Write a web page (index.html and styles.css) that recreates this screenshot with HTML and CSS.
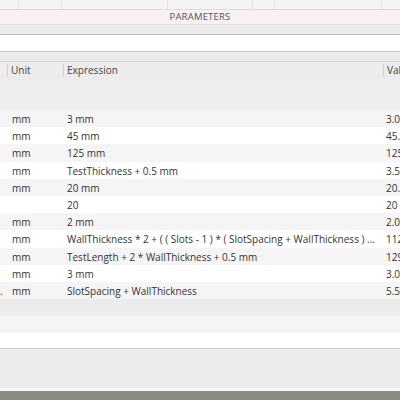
FILE: index.html
```html
<!DOCTYPE html>
<html lang="en">
<head>
  <meta charset="UTF-8" />
  <meta name="viewport" content="width=device-width, initial-scale=1.0"/>
  <title>Parameters</title>
  <link rel="stylesheet" href="styles.css">
</head>
<body>
  <div class="backdrop">
    <span></span><span></span><span></span><span></span><span></span><span></span>
  </div>

  <div class="dialog">
    <div class="titlebar">PARAMETERS</div>
    <div class="toolbar"></div>
    <div class="search"></div>
    <div class="gap"></div>

    <div class="table">
      <div class="row head">
        <div class="cell cut"></div>
        <div class="cell">Unit</div>
        <div class="cell">Expression</div>
        <div class="cell">Val</div>
      </div>
      <div class="group"></div>

      <div class="rows">
        <div class="row"><div class="cell cut"></div><div class="cell">mm</div><div class="cell">3 mm</div><div class="cell">3.0</div></div>
        <div class="row"><div class="cell cut"></div><div class="cell">mm</div><div class="cell">45 mm</div><div class="cell">45.</div></div>
        <div class="row"><div class="cell cut"></div><div class="cell">mm</div><div class="cell">125 mm</div><div class="cell">125</div></div>
        <div class="row"><div class="cell cut"></div><div class="cell">mm</div><div class="cell">TestThickness + 0.5 mm</div><div class="cell">3.5</div></div>
        <div class="row"><div class="cell cut"></div><div class="cell">mm</div><div class="cell">20 mm</div><div class="cell">20.</div></div>
        <div class="row"><div class="cell cut"></div><div class="cell"></div><div class="cell">20</div><div class="cell">20</div></div>
        <div class="row"><div class="cell cut"></div><div class="cell">mm</div><div class="cell">2 mm</div><div class="cell">2.0</div></div>
        <div class="row"><div class="cell cut"></div><div class="cell">mm</div><div class="cell">WallThickness * 2 + ( ( Slots - 1 ) * ( SlotSpacing + WallThickness ) ...</div><div class="cell">112</div></div>
        <div class="row"><div class="cell cut"></div><div class="cell">mm</div><div class="cell">TestLength + 2 * WallThickness + 0.5 mm</div><div class="cell">129</div></div>
        <div class="row"><div class="cell cut"></div><div class="cell">mm</div><div class="cell">3 mm</div><div class="cell">3.0</div></div>
        <div class="row"><div class="cell cut">.</div><div class="cell">mm</div><div class="cell">SlotSpacing + WallThickness</div><div class="cell">5.5</div></div>
        <div class="row blank dim"></div>
        <div class="row blank"></div>
        <div class="row blank last"></div>
      </div>
    </div>

    <div class="footer"></div>
  </div>
</body>
</html>
```

FILE: styles.css
```css
* {
  margin: 0;
  padding: 0;
  box-sizing: border-box;
}

body {
  width: 400px;
  height: 400px;
  overflow: hidden;
  background: #8c8882;
  font-family: "Open Sans", "Noto Sans", Arial, sans-serif;
  color: #333;
}

.backdrop {
  height: 10px;
  background: #f4f4f4;
  border-bottom: 1px solid #dcdcdc;
  display: grid;
  grid-template-columns: 19px 43px 106px 85px 22px 107px 18px;
}

.backdrop span {
  border-right: 1px solid #e2e2e2;
}

.dialog {
  display: flex;
  flex-direction: column;
  background: #ececec;
}

.titlebar {
  height: 15px;
  background: #f7f2f1;
  border-bottom: 1px solid #dedede;
  text-align: center;
  font-size: 9.5px;
  line-height: 14px;
  letter-spacing: 0.2px;
  color: #555;
}

.toolbar {
  height: 10px;
  background: #ececec;
  border-bottom: 1px solid #bdbdbd;
}

.search {
  height: 17px;
  background: #fff;
  border-bottom: 1px solid #c8c8c8;
}

.gap {
  height: 10px;
  background: #ebebeb;
  border-bottom: 1px solid #dadada;
}

.table,
.rows {
  display: flex;
  flex-direction: column;
}

.row {
  display: grid;
  grid-template-columns: 7px 56px 320px 17px;
  height: 17.2px;
  flex-shrink: 0;
  font-size: 10px;
  line-height: 18px;
  white-space: nowrap;
}

.rows .row.blank {
  height: 17px;
}

.rows .row.last {
  height: 15px;
}

.rows .row:nth-child(odd) {
  background: #f5f5f5;
}

.rows .row:nth-child(even) {
  background: #fff;
}

.rows .row.dim {
  background: #ececec;
}

.row .cell {
  overflow: hidden;
  padding-left: 5px;
}

.row .cut {
  padding-left: 0;
}

.row .cell:nth-child(3) {
  padding-left: 4px;
}

.row .cell:nth-child(4) {
  padding-left: 3px;
}

.head {
  background: #ececec;
  height: 18px;
  color: #444;
}

.head .cell {
  border-left: 1px solid #d0d0d0;
  margin: 2px 0 3px;
  line-height: 13px;
  padding-left: 3px;
}

.head .cell.cut {
  border-left: none;
}

.head .cell:nth-child(3) {
  padding-left: 3px;
}

.group {
  height: 30px;
  background: #eeeeee;
}

.footer {
  height: 43px;
  background: #ebebeb;
  border-top: 1px solid #cfcfcf;
  border-bottom: 3px solid #f6f6f6;
}
```
